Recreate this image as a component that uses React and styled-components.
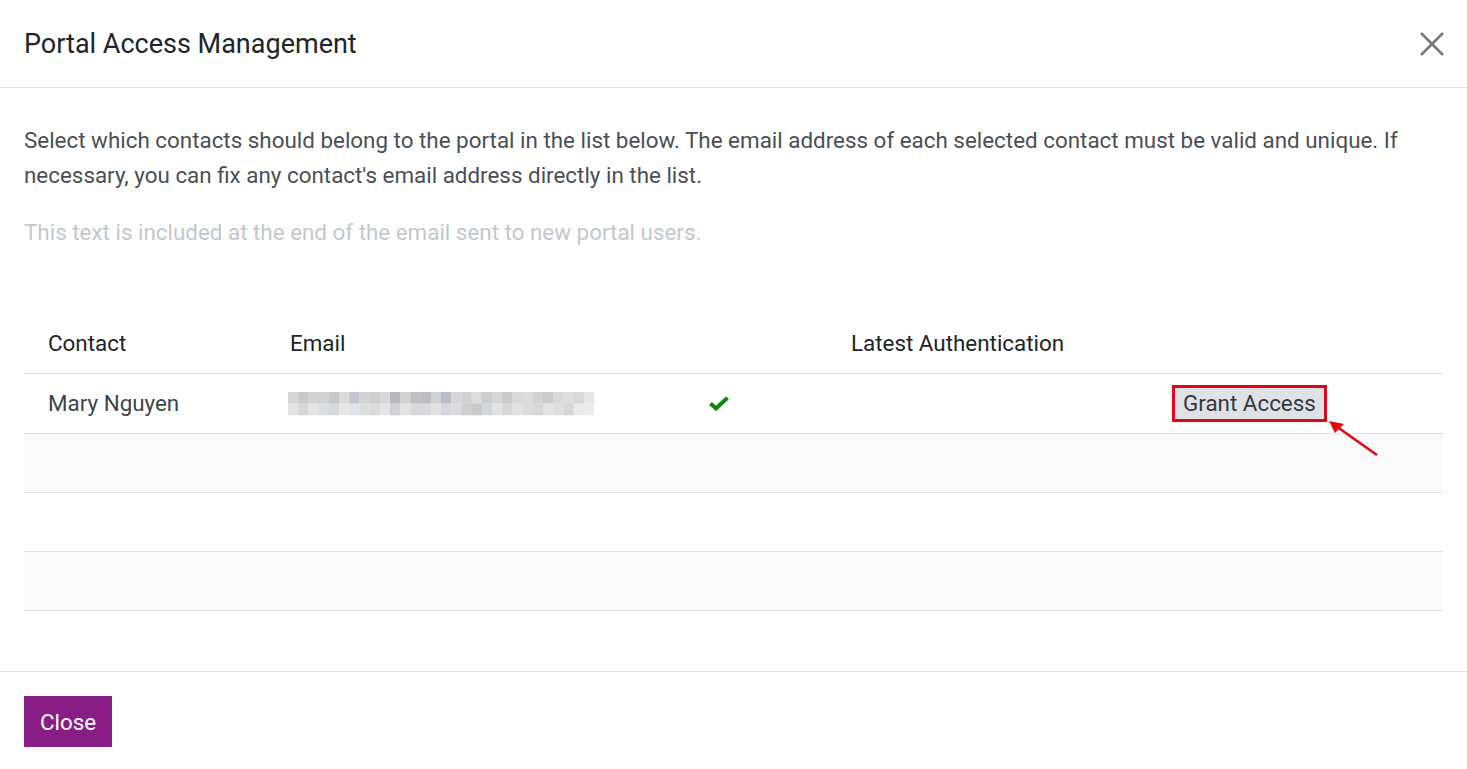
import React from "react";
import styled, { createGlobalStyle } from "styled-components";

const Global = createGlobalStyle`
  html, body { margin: 0; padding: 0; background: #fff; }
  body { font-family: Roboto, "Noto Sans", "Liberation Sans", sans-serif; }
  * { box-sizing: border-box; }
`;

const Modal = styled.div`
  width: 1467px;
  height: 769px;
  background: #fff;
  display: flex;
  flex-direction: column;
  position: relative;
`;

const Header = styled.header`
  height: 88px;
  border-bottom: 1px solid #dee2e6;
  display: flex;
  align-items: center;
  justify-content: space-between;
  padding: 0 23px 0 24px;
`;

const Title = styled.h4`
  margin: 0;
  font-size: 27px;
  font-weight: 400;
  color: #212529;
`;

const CloseX = styled.button`
  border: 0;
  background: none;
  padding: 0;
  width: 24px;
  height: 24px;
  display: flex;
  cursor: pointer;
`;

const Body = styled.main`
  padding: 35px 24px 60px 24px;
  flex: 1;
`;

const Lead = styled.p`
  margin: 0;
  font-size: 22.4px;
  line-height: 35px;
  color: #4a4f55;
`;

const Placeholder = styled.p`
  margin: 22px 0 0 0;
  font-size: 22.4px;
  line-height: 35px;
  color: #c3c7cd;
`;

const Table = styled.table`
  margin-top: 63px;
  width: 1419px;
  border-collapse: collapse;
  table-layout: fixed;
  font-size: 22.4px;
`;

const Th = styled.th`
  text-align: left;
  font-weight: 400;
  color: #212529;
  height: 60px;
  padding: 0 0 0 24px;
  border-bottom: 1px solid #dee2e6;
`;

const Tr = styled.tr`
  background: ${(p) => (p.$striped ? "#fafafa" : "#fff")};
  & > td { height: ${(p) => (p.$tall ? "60px" : "59px")}; }
`;

const Td = styled.td`
  padding: 0 0 0 24px;
  color: #3f444a;
  border-bottom: 1px solid #dee2e6;
  vertical-align: middle;
`;

const Pixelated = styled.svg`
  display: block;
  margin-left: -2px;
`;

const Check = styled.svg`
  display: block;
`;

const GrantWrap = styled.div`
  display: inline-block;
  position: relative;
  border: 3px solid #e30613;
  margin-top: 1px;
  margin-left: -1px;
`;

const GrantButton = styled.button`
  display: block;
  border: 0;
  background: #dee2e6;
  color: #343a40;
  font-family: inherit;
  font-size: 22.4px;
  line-height: 31px;
  padding: 0 8px;
  cursor: pointer;
`;

const Arrow = styled.svg`
  position: absolute;
  left: calc(100% + 5px);
  top: 33px;
  overflow: visible;
`;

const Footer = styled.footer`
  border-top: 1px solid #dee2e6;
  height: 98px;
  padding: 24px 24px;
`;

const PrimaryButton = styled.button`
  border: 0;
  background: #8a1c85;
  color: #fff;
  font-family: inherit;
  font-size: 22.4px;
  height: 51px;
  padding: 0 16px;
  cursor: pointer;
`;

const shades = [
  ["#d6d6d8","#c9cacd","#d2d3d5","#cfd0d2","#c7c8cb","#dadbdc","#c3c6ce","#d3d3d4","#cecfd1","#d7d8d9","#b6b8bd","#d2d2d3","#bfc0c4","#bdbec2","#cfd0d1","#b9bfc8","#d6d6d8","#d0d1d3","#dcdcdd","#cdced0","#d6d6d8","#c8c9cc","#d9dadb","#dcdcdd","#d1d2d4","#cacbce","#d7d8d9","#dfdfe0","#d8d8d9","#e6e6e7"],
  ["#e3e3e4","#d7d7d9","#e5e4e2","#dcdee1","#d8d9db","#e7e6e5","#dfe2e7","#dedede","#dadbdc","#e5e5e6","#d0d1d4","#e2e2e3","#d9d9db","#dadadc","#e1e1e2","#d6d8dc","#dcdcdd","#cfcfd1","#c9c9cb","#d3d6dc","#e2e2e2","#d6d7d9","#e2e2e3","#dcdcde","#d8d8da","#e2e2e3","#dfdfe0","#d6d7d9","#eaeaea","#ececec"],
];

function EmailBlur() {
  const w = 10.2;
  return (
    <Pixelated width="308" height="25" viewBox="0 0 308 25">
      {shades.map((row, r) =>
        row.map((c, i) => (
          <rect key={r + "-" + i} x={i * w} y={1 + r * 11.5} width={w + 0.3} height={11.8} fill={c} />
        ))
      )}
    </Pixelated>
  );
}

export default function App() {
  return (
    <>
      <Global />
      <Modal>
        <Header>
          <Title>Portal Access Management</Title>
          <CloseX aria-label="Close">
            <svg width="24" height="24" viewBox="0 0 24 24">
              <path d="M1 1 L23 23 M23 1 L1 23" stroke="#777" strokeWidth="2.6" fill="none" />
            </svg>
          </CloseX>
        </Header>
        <Body>
          <Lead>
            Select which contacts should belong to the portal in the list below. The email address of each selected contact must be valid and unique. If necessary, you can fix any contact's email address directly in the list.
          </Lead>
          <Placeholder>This text is included at the end of the email sent to new portal users.</Placeholder>
          <Table>
            <colgroup>
              <col style={{ width: 242 }} />
              <col style={{ width: 419 }} />
              <col style={{ width: 142 }} />
              <col style={{ width: 322 }} />
              <col style={{ width: 294 }} />
            </colgroup>
            <thead>
              <tr>
                <Th>Contact</Th>
                <Th>Email</Th>
                <Th></Th>
                <Th>Latest Authentication</Th>
                <Th></Th>
              </tr>
            </thead>
            <tbody>
              <Tr $tall>
                <Td>Mary Nguyen</Td>
                <Td><EmailBlur /></Td>
                <Td>
                  <Check width="20" height="15" viewBox="0 0 20 15">
                    <path d="M1.5 7.5 L7 12.5 L18.5 1.8" stroke="#0a8a0a" strokeWidth="4" fill="none" strokeLinejoin="miter" />
                  </Check>
                </Td>
                <Td></Td>
                <Td>
                  <GrantWrap>
                    <GrantButton>Grant Access</GrantButton>
                    <Arrow width="50" height="36" viewBox="0 0 50 36">
                      <path d="M48 34 L4 3" stroke="#e30613" strokeWidth="2.6" fill="none" />
                      <path d="M0 0 L15 3 L6 12 Z" fill="#e30613" />
                    </Arrow>
                  </GrantWrap>
                </Td>
              </Tr>
              <Tr $striped><Td /><Td /><Td /><Td /><Td /></Tr>
              <Tr><Td /><Td /><Td /><Td /><Td /></Tr>
              <Tr $striped><Td /><Td /><Td /><Td /><Td /></Tr>
            </tbody>
          </Table>
        </Body>
        <Footer>
          <PrimaryButton>Close</PrimaryButton>
        </Footer>
      </Modal>
    </>
  );
}
